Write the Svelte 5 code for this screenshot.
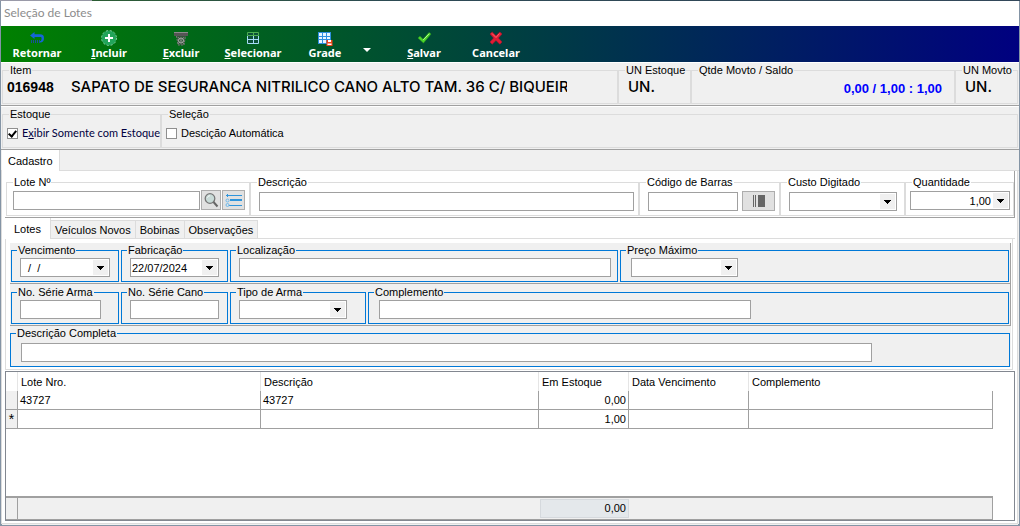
<script lang="ts">
  interface Lote {
    marker: string;
    numero: string;
    descricao: string;
    estoque: string;
    vencimento: string;
    complemento: string;
  }

  const lotes: Lote[] = [
    { marker: '', numero: '43727', descricao: '43727', estoque: '0,00', vencimento: '', complemento: '' },
    { marker: '*', numero: '', descricao: '', estoque: '1,00', vencimento: '', complemento: '' },
  ];

  const tabs = ['Lotes', 'Veículos Novos', 'Bobinas', 'Observações'];

  let activeTab = $state('Lotes');
  let somenteEstoque = $state(true);
  let automatica = $state(false);
</script>

{#snippet combo(id: string, value: string)}
  <span class="combo">
    <select {id}>
      <option>{value}</option>
    </select>
    <svg viewBox="0 0 15 15" aria-hidden="true"><path d="M4 6h7v1h-1v1h-1v1h-1v1h-1v-1h-1v-1h-1v-1h-1z" /></svg>
  </span>
{/snippet}

<div class="window">
  <header class="titlebar">Seleção de Lotes</header>

  <nav class="toolbar">
    <button>
      <svg viewBox="0 0 16 16">
        <path d="M1 5.500 5.500 2v2.200H11c3 0 4 1.500 4 4 0 2.500-1 4.300-4 4.300V11c1.200 0 1.600-1.300 1.600-2.600S12.200 7 11 7H5.500v2z" fill="#1565d8" />
        <path d="M2.500 10v3M4.500 10v3M6.500 10v3M8.500 10v3M10.500 10v3" stroke="#1a4f9c" stroke-width="1" />
      </svg>
      <span>Retornar</span>
    </button>
    <button>
      <svg viewBox="0 0 16 16">
        <circle cx="8" cy="8" r="7.500" fill="#22a55a" stroke="#9fd8b4" stroke-width=".8" stroke-dasharray="2 2" />
        <path d="M8 4v8M4 8h8" stroke="#fff" stroke-width="2" />
      </svg>
      <span><u>I</u>ncluir</span>
    </button>
    <button>
      <svg viewBox="0 0 16 16">
        <path d="M1 3h14v3H1z" fill="#555" />
        <path d="M1 2.500h14" stroke="#8b8b8b" />
        <path d="M3.500 6 5 15h6l1.500-9" fill="#33553a" stroke="#777" stroke-dasharray="2 1" />
        <circle cx="8" cy="10.500" r="2.500" fill="none" stroke="#b5b5b5" />
        <path d="m5 7 6 7M11 7l-6 7" stroke="#999" stroke-width=".7" />
      </svg>
      <span><u>E</u>xcluir</span>
    </button>
    <button>
      <svg viewBox="0 0 16 16">
        <path d="M2 2h12v12H2z" fill="#0b5238" />
        <path d="M8.500 6v7.500M2 9.500h12M2.500 6v7.500h11V6" fill="none" stroke="#a5dcf5" stroke-width="1" />
        <path d="M2.500 5.500v-3h11v3zM8.500 2v4" fill="none" stroke="#4caf50" stroke-width="1" />
      </svg>
      <span><u>S</u>elecionar</span>
    </button>
    <button>
      <svg viewBox="0 0 16 16">
        <path d="M1 2h13v12H1z" fill="#2f8fe0" />
        <path d="M2 3h3v3H2zM6 3h3v3H6zM10 3h3v3h-3zM2 7h3v2H2zM6 7h3v2H6zM10 7h3v2h-3zM2 10h3v3H2zM6 10h3v3H6z" fill="#e8f6ff" />
        <path d="M9.500 10h6v6h-6z" fill="#f04418" />
        <path d="M11 10h3v2h-3zM10.500 13.500h4V15h-4z" fill="#fff" />
      </svg>
      <span>Grade</span>
    </button>
    <button class="more" aria-label="Opções da grade">
      <svg viewBox="0 0 8 4"><path d="M0 0h8L4 4z" fill="#fff" /></svg>
    </button>
    <button>
      <svg viewBox="0 0 16 16">
        <path d="m2 8 2-1.800 3 3L13 2.500 15 4l-7.500 9z" fill="#4bd62c" stroke="#2a9c1b" stroke-width=".6" />
        <path d="m7.200 10 6-6.300" stroke="#b4f58d" stroke-width="1" />
      </svg>
      <span><u>S</u>alvar</span>
    </button>
    <button>
      <svg viewBox="0 0 16 16">
        <path d="m2 4 2.200-2L8 5.800 11.800 2 14 4l-3.600 4 3.600 4-2.200 2.200L8 10.400l-3.800 3.800L2 12l3.600-4z" fill="#e01c34" stroke="#b80f2b" stroke-width=".6" />
        <path d="M4 3.500 8 7.500l3.500-4" fill="none" stroke="#ff6a6a" stroke-width="1" />
      </svg>
      <span>Cancelar</span>
    </button>
  </nav>

  <section class="band item-band">
    <fieldset>
      <legend>Item</legend>
      <div class="value item"><span class="code">016948</span><span class="name">SAPATO DE SEGURANCA NITRILICO CANO ALTO TAM. 36 C/ BIQUEIRA</span></div>
    </fieldset>
    <fieldset>
      <legend>UN Estoque</legend>
      <div class="value unit">UN.</div>
    </fieldset>
    <fieldset>
      <legend>Qtde Movto / Saldo</legend>
      <div class="value balance">0,00 / 1,00 : 1,00</div>
    </fieldset>
    <fieldset>
      <legend>UN Movto</legend>
      <div class="value unit">UN.</div>
    </fieldset>
  </section>

  <section class="band filter-band">
    <fieldset>
      <legend>Estoque</legend>
      <label class="check strong"><input type="checkbox" bind:checked={somenteEstoque} /><span>E<u>x</u>ibir Somente com Estoque</span></label>
    </fieldset>
    <fieldset>
      <legend>Seleção</legend>
      <label class="check"><input type="checkbox" bind:checked={automatica} /><span>Descição Automática</span></label>
    </fieldset>
  </section>

  <div class="tabs outer"><button class="active">Cadastro</button></div>

  <main class="page">
    <section class="lot-row">
      <fieldset>
        <legend><label for="lote">Lote Nº</label></legend>
        <div class="line search">
          <input id="lote" type="text" class="grow" />
          <button class="tool" aria-label="Pesquisar lote">
            <svg viewBox="0 0 16 16" width="16" height="16">
              <circle cx="7" cy="6.500" r="4.800" fill="#c9dbd8" stroke="#777" stroke-width="1.300" />
              <path d="M4.500 5.500c.5-1.200 1.500-1.700 2.500-1.700" fill="none" stroke="#fff" />
              <path d="m10.500 10 4 4.500" stroke="#666" stroke-width="2" />
            </svg>
          </button>
          <button class="tool wide" aria-label="Listar lotes">
            <svg viewBox="0 0 18 16" width="18" height="16">
              <path d="M4 3.500h13M4 13.500h13" stroke="#2f95dc" stroke-width="1" />
              <path d="M5 8h12" stroke="#2f95dc" stroke-width="2" />
              <path d="M1 3.500h3M2.500 2v3" stroke="#2f95dc" />
              <circle cx="2.500" cy="8.500" r="1.500" fill="none" stroke="#6db9ec" />
              <circle cx="2.500" cy="13" r="1.500" fill="none" stroke="#6db9ec" />
            </svg>
          </button>
        </div>
      </fieldset>
      <fieldset>
        <legend><label for="descricao">Descrição</label></legend>
        <div class="line"><input id="descricao" type="text" class="grow" /></div>
      </fieldset>
      <fieldset>
        <legend><label for="barras">Código de Barras</label></legend>
        <div class="line">
          <input id="barras" type="text" class="grow" />
          <button class="tool scan" aria-label="Ler código de barras">
            <svg viewBox="0 0 14 12" width="14" height="12"><path d="M1 0h1v12H1zM3 0h1v12H3zM6 0h7v12H6z" fill="#666" /></svg>
          </button>
        </div>
      </fieldset>
      <fieldset>
        <legend><label for="custo">Custo Digitado</label></legend>
        <div class="line cost">{@render combo('custo', '')}</div>
      </fieldset>
      <fieldset>
        <legend><label for="quantidade">Quantidade</label></legend>
        <div class="line number">{@render combo('quantidade', '1,00')}</div>
      </fieldset>
    </section>

    <div class="tabs inner">
      {#each tabs as tab (tab)}
        <button class:active={tab === activeTab} onclick={() => (activeTab = tab)}>{tab}</button>
      {/each}
    </div>

    <section class="details">
      <div class="detail-row first">
        <fieldset>
          <legend><label for="vencimento">Vencimento</label></legend>
          <div class="line">{@render combo('vencimento', '\u00a0\u00a0/\u00a0\u00a0/')}</div>
        </fieldset>
        <fieldset>
          <legend><label for="fabricacao">Fabricação</label></legend>
          <div class="line">{@render combo('fabricacao', '22/07/2024')}</div>
        </fieldset>
        <fieldset>
          <legend><label for="localizacao">Localização</label></legend>
          <div class="line place"><input id="localizacao" type="text" class="grow" /></div>
        </fieldset>
        <fieldset>
          <legend><label for="preco">Preço Máximo</label></legend>
          <div class="line price">{@render combo('preco', '')}</div>
        </fieldset>
      </div>
      <div class="detail-row second">
        <fieldset>
          <legend><label for="serie-arma">No. Série Arma</label></legend>
          <div class="line arma"><input id="serie-arma" type="text" class="grow" /></div>
        </fieldset>
        <fieldset>
          <legend><label for="serie-cano">No. Série Cano</label></legend>
          <div class="line"><input id="serie-cano" type="text" class="grow" /></div>
        </fieldset>
        <fieldset>
          <legend><label for="tipo-arma">Tipo de Arma</label></legend>
          <div class="line tipo">{@render combo('tipo-arma', '')}</div>
        </fieldset>
        <fieldset>
          <legend><label for="complemento">Complemento</label></legend>
          <div class="line extra"><input id="complemento" type="text" /></div>
        </fieldset>
      </div>
      <div class="detail-row third">
        <fieldset>
          <legend><label for="completa">Descrição Completa</label></legend>
          <div class="line full"><input id="completa" type="text" /></div>
        </fieldset>
      </div>
    </section>

    <section class="grid">
      <table>
        <colgroup>
          <col class="c-mark" /><col class="c-lote" /><col class="c-desc" /><col class="c-est" /><col class="c-venc" /><col />
        </colgroup>
        <thead>
          <tr><th></th><th>Lote Nro.</th><th>Descrição</th><th>Em Estoque</th><th>Data Vencimento</th><th>Complemento</th></tr>
        </thead>
        <tbody>
          {#each lotes as lote, i (i)}
            <tr>
              <td class="mark">{lote.marker}</td>
              <td>{lote.numero}</td>
              <td>{lote.descricao}</td>
              <td class="num">{lote.estoque}</td>
              <td>{lote.vencimento}</td>
              <td>{lote.complemento}</td>
            </tr>
          {/each}
        </tbody>
      </table>
      <footer><span class="foot-mark"></span><output>0,00</output></footer>
    </section>
  </main>
</div>

<style>
  :global(body) {
    margin: 0;
  }

  .window,
  .window * {
    box-sizing: border-box;
  }

  .window {
    display: flex;
    flex-direction: column;
    min-height: 100vh;
    padding: 1px;
    background: linear-gradient(90deg, #9a9aa8 9%, #2b5c33 9%, #2d4a55 40%, #33475a) top / 100% 1px no-repeat #8494a5;
    color: #000;
    font: 11px/12px 'Liberation Sans', Arial, sans-serif;
  }

  button,
  input,
  select {
    margin: 0;
    font: inherit;
    color: inherit;
    border-radius: 0;
  }

  .titlebar {
    height: 25px;
    padding: 0 3px;
    background: #fff;
    color: #8c8c8c;
    font: 12px/24px Lato, 'Open Sans', sans-serif;
  }

  .toolbar {
    display: flex;
    height: 36px;
    background: linear-gradient(90deg, #008000, #000080);
  }

  .toolbar button {
    display: flex;
    flex-direction: column;
    align-items: center;
    width: 72px;
    padding: 4px 0 2px;
    border: 0;
    background: none;
    color: #fff;
    font: bold 11px/14px 'Noto Sans', 'Open Sans', sans-serif;
  }

  .toolbar svg {
    width: 16px;
    height: 16px;
    flex: none;
  }

  .toolbar .more {
    width: 27px;
    padding: 22px 0 0 2px;
    align-items: flex-start;
  }

  .toolbar .more svg {
    width: 8px;
    height: 4px;
  }

  .band {
    display: grid;
    padding: 2px 1px 1px;
    background: #f0f0f0;
    border-bottom: 1px solid #a0a0a0;
    box-shadow: inset 0 1px #fff;
  }

  .item-band {
    grid-template-columns: minmax(0, 1fr) 73px 264px 63px;
  }

  .filter-band {
    grid-template-columns: 159px minmax(0, 1fr);
  }

  fieldset {
    min-width: 0;
    height: 40px;
    margin: 0;
    padding: 0;
    border: 1px solid #dcdcdc;
  }

  legend {
    height: 12px;
    margin-left: 6px;
    padding: 0 1px;
    white-space: nowrap;
  }

  .value {
    padding-top: 3px;
    font-weight: bold;
    font-size: 14px;
    line-height: 16px;
    white-space: nowrap;
  }

  .item {
    display: flex;
    padding-left: 4px;
    padding-right: 50px;
  }

  .code {
    flex: none;
    width: 64px;
  }

  .name,
  .unit {
    font-family: Inter, 'Liberation Sans', sans-serif;
    font-size: 15px;
    font-weight: 500;
  }

  .name {
    overflow: hidden;
  }

  .unit {
    padding-left: 9px;
  }

  .balance {
    padding: 5px 12px 0 0;
    color: #0000ff;
    font-size: 13px;
    text-align: right;
  }

  .check {
    display: flex;
    align-items: center;
    gap: 4px;
    padding: 6px 0 0 4px;
    line-height: 14px;
    white-space: nowrap;
  }

  .check.strong {
    color: #000040;
    font-family: Lato, 'Open Sans', sans-serif;
  }

  .check input {
    appearance: none;
    display: grid;
    place-items: center;
    flex: none;
    width: 11px;
    height: 11px;
    border: 1px solid #8f8f8f;
    background: #fff;
  }

  .check input:checked::before {
    content: '';
    width: 3px;
    height: 6px;
    margin-bottom: 2px;
    border: solid #000;
    border-width: 0 2px 2px 0;
    transform: rotate(40deg);
  }

  .tabs {
    display: flex;
    align-items: flex-end;
    height: 21px;
    box-shadow: inset 0 -1px #dcdcdc;
  }

  .tabs button {
    height: 19px;
    padding: 0 4px;
    border: 1px solid #dcdcdc;
    border-left: 0;
    background: #f0f0f0;
  }

  .tabs .active {
    height: 21px;
    padding: 0 9px;
    border-width: 0 1px 0 0;
    background: #fff;
  }

  .outer {
    padding-left: 1px;
    background: #f0f0f0;
  }

  .outer .active {
    padding: 0 6px;
  }

  .page {
    display: flex;
    flex: 1;
    flex-direction: column;
    margin: 0 1px 1px;
    padding: 0 2px 2px 3px;
    background: #fff;
    border: solid #dcdcdc;
    border-width: 0 1px 1px 0;
    box-shadow: 1px 0 #f0f0f0, -1px 0 #dcdcdc, 0 1px #f0f0f0;
  }

  .lot-row {
    display: grid;
    grid-template-columns: 244px minmax(0, 1fr) 141px 125px 109px;
    padding: 5px 0 1px 1px;
    border: solid #a0a0a0;
    border-width: 0 1px 1px 0;
  }

  .line {
    display: flex;
    padding: 4px 4px 0 8px;
  }

  .lot-row .search {
    padding: 3px 4px 0 6px;
  }

  .lot-row .cost {
    padding-right: 7px;
  }

  .lot-row .number {
    padding: 3px 3px 0 4px;
  }

  input[type='text'],
  select {
    min-width: 0;
    height: 19px;
    padding: 0 2px;
    border: 1px solid #a0a0a0;
    background: #fff;
  }

  .grow {
    flex: 1;
  }

  .tool {
    display: grid;
    place-items: center;
    width: 20px;
    height: 20px;
    margin: -1px 0 0 1px;
    padding: 0;
    border: 1px solid #adadad;
    background: #e1e1e1;
  }

  .tool.wide {
    width: 23px;
  }

  .tool.scan {
    width: 33px;
    margin-left: 4px;
  }

  .combo {
    position: relative;
    display: flex;
    flex: 1;
    min-width: 0;
  }

  .combo select {
    appearance: none;
    width: 100%;
    padding: 0 18px 0 1px;
  }

  .combo svg {
    position: absolute;
    top: 2px;
    right: 2px;
    width: 15px;
    height: 15px;
    background: #f0f0f0;
    pointer-events: none;
  }

  .number select {
    text-align-last: right;
  }

  .details {
    display: flex;
    flex-direction: column;
    padding: 4px 1px 2px 4px;
    border: solid #dcdcdc;
    border-width: 0 1px 1px 1px;
    margin-right: 2px;
  }

  .detail-row {
    display: grid;
    gap: 2px;
    padding: 2px 1px 1px;
    background: #f0f0f0;
    border-bottom: 1px solid #a0a0a0;
    border-right: 1px solid #a0a0a0;
  }

  .first {
    grid-template-columns: 108px 107px 388px minmax(0, 1fr);
    padding-top: 1px;
  }

  .second {
    grid-template-columns: 108px 107px 136px minmax(0, 1fr);
  }

  .third {
    padding: 1px 1px 0 0;
    border: 0;
  }

  .detail-row fieldset {
    height: 38px;
    border-color: #0078d7;
  }

  .detail-row legend {
    margin-left: 5px;
  }

  .third fieldset {
    height: 40px;
  }

  .detail-row .line {
    padding: 2px 8px 0;
  }

  .detail-row .place {
    padding-right: 6px;
  }

  .detail-row .arma {
    padding-right: 17px;
  }

  .detail-row .tipo {
    padding-right: 18px;
  }

  .detail-row .price,
  .detail-row .extra {
    padding-left: 10px;
  }

  .price .combo {
    flex: 0 0 107px;
  }

  .extra input {
    width: 372px;
  }

  .detail-row .full {
    padding: 4px 10px 0;
  }

  .full input {
    width: 87%;
  }

  .grid {
    display: flex;
    flex: 1;
    flex-direction: column;
    justify-content: space-between;
    margin-top: 1px;
    border: 1px solid #828790;
  }

  table {
    width: calc(100% - 21px);
    table-layout: fixed;
    border-collapse: separate;
    border-spacing: 0;
  }

  .c-mark {
    width: 12px;
  }

  .c-lote {
    width: 243px;
  }

  .c-desc {
    width: 278px;
  }

  .c-est {
    width: 90px;
  }

  .c-venc {
    width: 120px;
  }

  th,
  td {
    height: 19px;
    padding: 0 2px;
    text-align: left;
    white-space: nowrap;
  }

  th {
    padding: 0 3px;
    border-right: 1px solid #e5e5e5;
    font-weight: normal;
  }

  th:last-child {
    border-right: 0;
  }

  td {
    border: solid #a0a0a0;
    border-width: 0 1px 1px 0;
  }

  .num {
    text-align: right;
  }

  .mark {
    padding: 0;
    background: #f0f0f0;
    font-size: 14px;
    text-align: center;
  }

  footer {
    display: grid;
    grid-template-columns: 12px 522px 89px 1fr;
    height: 24px;
    margin-right: 21px;
    border: solid #a0a0a0;
    border-width: 2px 1px 1px 0;
    background: #f0f0f0;
  }

  .foot-mark {
    border-right: 1px solid #a0a0a0;
  }

  output {
    grid-column: 3;
    margin: 1px 0;
    padding-right: 2px;
    border: 1px solid #d5d9dd;
    background: #e4e8eb;
    line-height: 17px;
    text-align: right;
  }
</style>
